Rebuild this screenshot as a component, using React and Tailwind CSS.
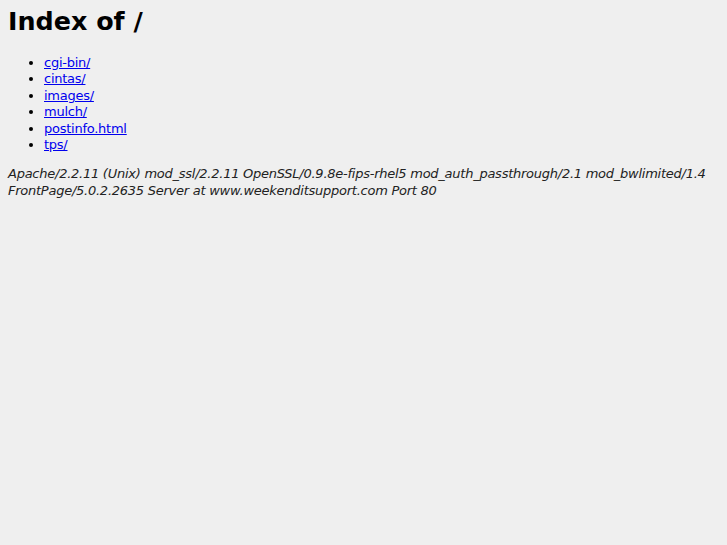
export default function App() {
  const entries = ['cgi-bin/', 'cintas/', 'images/', 'mulch/', 'postinfo.html', 'tps/'];

  return (
    <div className="min-h-[545px] bg-[#efefef] px-2 pt-[7px] text-[13px] leading-[16.4px] tracking-[-0.25px] text-black" style={{ fontFamily: '"DejaVu Sans", sans-serif' }}>
      <h1 className="text-[25.4px] leading-[29px] font-bold tracking-normal mb-[19px]">Index of /</h1>
      <ul className="list-disc pl-9">
        {entries.map((name) => (
          <li key={name}>
            <a href="#" className="text-[#0000ee] underline">{name}</a>
          </li>
        ))}
      </ul>
      <address className="mt-[13px] italic text-[#222]">
        Apache/2.2.11 (Unix) mod_ssl/2.2.11 OpenSSL/0.9.8e-fips-rhel5 mod_auth_passthrough/2.1 mod_bwlimited/1.4 FrontPage/5.0.2.2635 Server at www.weekenditsupport.com Port 80
      </address>
    </div>
  );
}
